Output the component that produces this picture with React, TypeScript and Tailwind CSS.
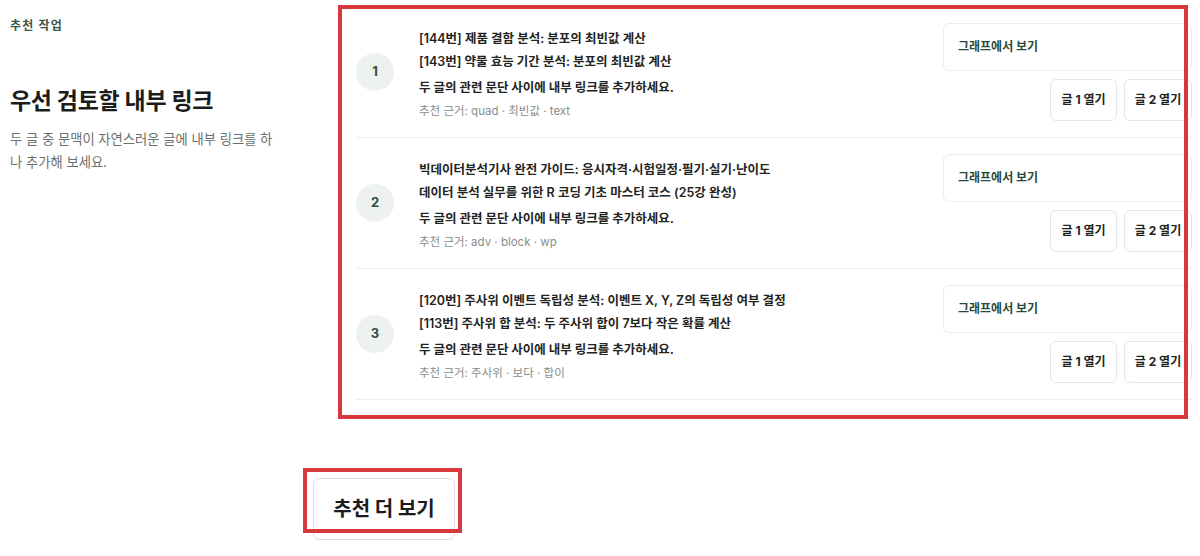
import React from 'react';

const rows = [
  {
    n: 1,
    a: '[144번] 제품 결함 분석: 분포의 최빈값 계산',
    b: '[143번] 약물 효능 기간 분석: 분포의 최빈값 계산',
    why: '추천 근거: quad · 최빈값 · text',
  },
  {
    n: 2,
    a: '빅데이터분석기사 완전 가이드: 응시자격·시험일정·필기·실기·난이도',
    b: '데이터 분석 실무를 위한 R 코딩 기초 마스터 코스 (25강 완성)',
    why: '추천 근거: adv · block · wp',
  },
  {
    n: 3,
    a: '[120번] 주사위 이벤트 독립성 분석: 이벤트 X, Y, Z의 독립성 여부 결정',
    b: '[113번] 주사위 합 분석: 두 주사위 합이 7보다 작은 확률 계산',
    why: '추천 근거: 주사위 · 보다 · 합이',
  },
];

export default function App() {
  return (
    <div className="relative w-[1200px] h-[556px] overflow-hidden bg-white font-['Inter','Noto_Sans_CJK_KR',sans-serif] text-[#1f2421]">
      <div className="flex items-start">
        {/* left intro */}
        <div className="w-[290px] pl-[10px] pt-[18px] shrink-0">
          <p className="text-[12px] leading-[16px] font-bold text-[#3b5546] tracking-[1.2px]">추천 작업</p>
          <h2 className="mt-[52px] text-[23px] leading-[30px] font-bold tracking-[-0.3px] text-[#1a1d1b]">우선 검토할 내부 링크</h2>
          <p className="mt-[12px] w-[272px] text-[13.3px] leading-[23px] text-[#6b6f6c]">
            두 글 중 문맥이 자연스러운 글에 내부 링크를 하나 추가해 보세요.
          </p>
        </div>

        {/* list */}
        <div className="ml-[66px] mt-[7px] w-[836px] shrink-0">
          {rows.map((r) => (
            <div key={r.n} className="flex items-center py-4 border-b border-[#eeeeee]">
              <div className="w-[38px] h-[38px] rounded-full bg-[#eef2ef] flex items-center justify-center text-[13px] font-bold text-[#2f4d3d] shrink-0">
                {r.n}
              </div>
              <div className="ml-[25px] mt-[3px] flex-1 min-w-0">
                <p className="text-[12.5px] leading-[23px] font-semibold">{r.a}</p>
                <p className="text-[12.5px] leading-[23px] font-semibold">{r.b}</p>
                <p className="mt-[3px] text-[12.5px] leading-[23px] font-bold">두 글의 관련 문단 사이에 내부 링크를 추가하세요.</p>
                <p className="mt-[2px] text-[11.5px] leading-[20px] text-[#8a8d8b]">{r.why}</p>
              </div>
              <div className="w-[249px] flex flex-col gap-2 shrink-0">
                <button className="h-12 w-full rounded-md border border-[#ececec] bg-white px-[14px] text-left text-[12px] font-bold text-[#2a4a39]">
                  그래프에서 보기
                </button>
                <div className="flex justify-end gap-[7px]">
                  <button className="h-[42px] w-[67px] rounded-md border border-[#e6e6e6] bg-white text-[12px] font-bold">글 1 열기</button>
                  <button className="h-[42px] w-[68px] rounded-md border border-[#e6e6e6] bg-white text-[12px] font-bold">글 2 열기</button>
                </div>
              </div>
            </div>
          ))}
        </div>
      </div>

      <div className="mt-[78px] ml-[313px]">
        <button className="h-[62px] w-[142px] rounded-md border border-[#dedede] bg-white text-[20px] font-bold text-[#1a1d1b]">
          추천 더 보기
        </button>
      </div>

      {/* annotation boxes */}
      <div className="absolute left-[338px] top-[5px] w-[850px] h-[414px] border-4 border-[#d8383c] pointer-events-none" />
      <div className="absolute left-[303px] top-[468px] w-[159px] h-[65px] border-4 border-[#d8383c] pointer-events-none" />
    </div>
  );
}
